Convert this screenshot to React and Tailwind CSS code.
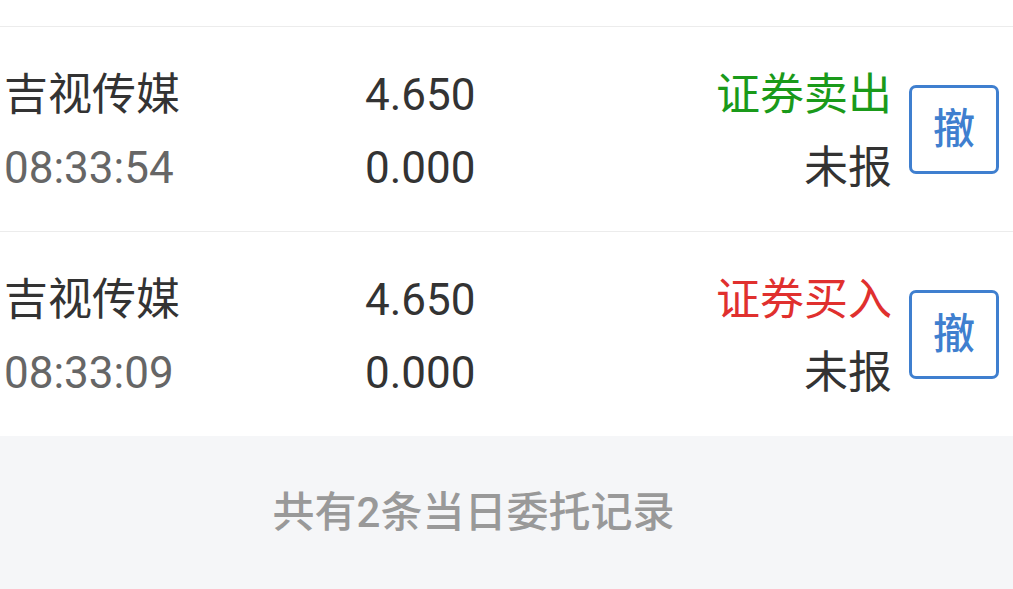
import React from 'react';

const orders = [
  { name: '吉视传媒', time: '08:33:54', price: '4.650', filled: '0.000', side: '证券卖出', sideColor: 'text-[#1a9a1a]', status: '未报' },
  { name: '吉视传媒', time: '08:33:09', price: '4.650', filled: '0.000', side: '证券买入', sideColor: 'text-[#e0302e]', status: '未报' },
];

const App = () => {
  return (
    <div
      className="w-[1013px] h-[589px] bg-white overflow-hidden flex flex-col"
      style={{ fontFamily: 'Roboto, "Noto Sans CJK SC", sans-serif' }}
    >
      <div className="h-[27px] border-b border-[#ececec] shrink-0"></div>

      {orders.map((order, i) => (
        <div
          key={order.time}
          className={`flex items-center shrink-0 ${i < orders.length - 1 ? 'border-b border-[#ececec] h-[205px]' : 'h-[204px]'}`}
        >
          {/* Name / time */}
          <div className="w-[365px] pl-[4px] pt-[5px] text-[44px] leading-[73px]">
            <div className="text-[#333333]">{order.name}</div>
            <div className="text-[#666666]">{order.time}</div>
          </div>

          {/* Price */}
          <div className="w-[110px] pt-[5px] text-[44px] leading-[73px] text-[#333333]">
            <div>{order.price}</div>
            <div>{order.filled}</div>
          </div>

          {/* Side / status */}
          <div className="flex-1 pt-[5px] text-right text-[44px] leading-[73px]">
            <div className={order.sideColor}>{order.side}</div>
            <div className="text-[#333333]">{order.status}</div>
          </div>

          <button className="ml-[17px] mr-[14px] w-[90px] h-[89px] border-[3px] border-[#3f7fcf] rounded-[7px] flex items-center justify-center text-[#3f7fcf] text-[42px] font-medium">
            撤
          </button>
        </div>
      ))}

      <div className="flex-1 bg-[#f5f6f8] flex items-center justify-center pr-[66px]">
        <span className="text-[42px] font-medium text-[#999999]">共有2条当日委托记录</span>
      </div>
    </div>
  );
};

export default App;
